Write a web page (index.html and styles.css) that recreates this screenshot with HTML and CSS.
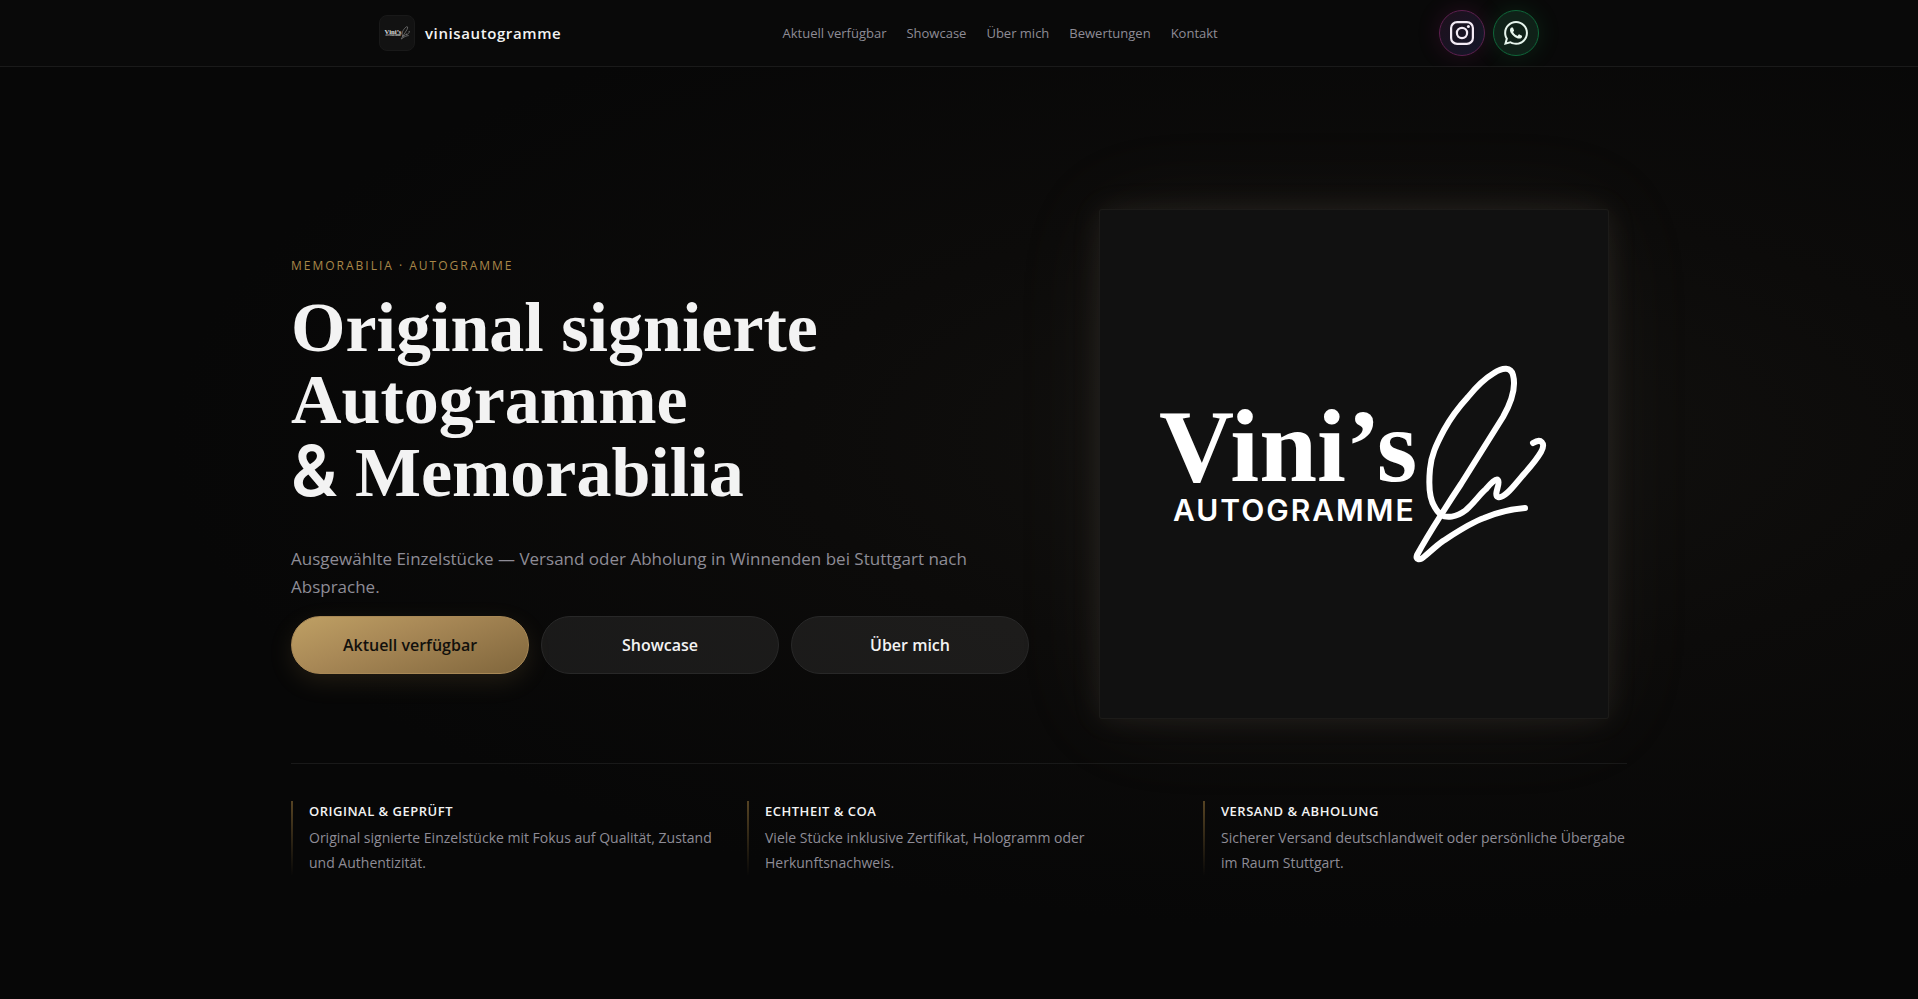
FILE: index.html
```
<!DOCTYPE html>
<html lang="de">
<head>
  <meta charset="UTF-8">
  <meta name="viewport" content="width=device-width, initial-scale=1.0">
  <title>vinisautogramme</title>
  <link rel="stylesheet" href="styles.css">
</head>
<body>
  <header class="site-header">
    <div class="header-inner">
      <a class="brand" href="#top">
        <span class="brand-mark">
          <svg viewBox="50 150 400 208" aria-hidden="true">
            <use href="#logo"></use>
          </svg>
        </span>
        <span class="brand-name">vinisautogramme</span>
      </a>
      <nav class="nav">
        <a href="#verfuegbar">Aktuell verfügbar</a>
        <a href="#showcase">Showcase</a>
        <a href="#ueber-mich">Über mich</a>
        <a href="#bewertungen">Bewertungen</a>
        <a href="#kontakt">Kontakt</a>
      </nav>
      <div class="socials">
        <a class="social social-instagram" href="#instagram" aria-label="Instagram">
          <svg viewBox="0 0 24 24" fill="none" stroke="currentColor" stroke-width="2.2" aria-hidden="true">
            <rect x="1.1" y="1.1" width="21.8" height="21.8" rx="6"></rect>
            <circle cx="12" cy="12" r="5.1"></circle>
            <circle cx="18.4" cy="5.6" r="1.5" fill="currentColor" stroke="none"></circle>
          </svg>
        </a>
        <a class="social social-whatsapp" href="#whatsapp" aria-label="WhatsApp">
          <svg viewBox="0 0 24 24" fill="currentColor" aria-hidden="true">
            <path d="M17.472 14.382c-.297-.149-1.758-.867-2.03-.967-.273-.099-.471-.148-.67.15-.197.297-.767.966-.94 1.164-.173.199-.347.223-.644.075-.297-.15-1.255-.463-2.39-1.475-.883-.788-1.48-1.761-1.653-2.059-.173-.297-.018-.458.13-.606.134-.133.298-.347.446-.52.149-.174.198-.298.298-.497.099-.198.05-.371-.025-.52-.075-.149-.669-1.612-.916-2.207-.242-.579-.487-.5-.669-.51-.173-.008-.371-.01-.57-.01-.198 0-.52.074-.792.372-.272.297-1.04 1.016-1.04 2.479 0 1.462 1.065 2.875 1.213 3.074.149.198 2.096 3.2 5.077 4.487.709.306 1.262.489 1.694.625.712.227 1.36.195 1.871.118.571-.085 1.758-.719 2.006-1.413.248-.694.248-1.289.173-1.413-.074-.124-.272-.198-.57-.347"></path>
            <path d="M.057 24l1.687-6.163c-1.041-1.804-1.588-3.849-1.587-5.946.003-6.556 5.338-11.891 11.893-11.891 3.181.001 6.167 1.24 8.413 3.488 2.245 2.248 3.481 5.236 3.48 8.414-.003 6.557-5.338 11.892-11.893 11.892-1.99-.001-3.951-.5-5.688-1.448l-6.305 1.654zm6.597-3.807c1.676.995 3.276 1.591 5.392 1.592 5.448 0 9.886-4.434 9.889-9.885.002-5.462-4.415-9.89-9.881-9.892-5.452 0-9.887 4.434-9.889 9.884-.001 2.225.651 3.891 1.746 5.634l-.999 3.648 3.742-.981z"></path>
          </svg>
        </a>
      </div>
    </div>
  </header>

  <main class="hero" id="top">
    <div class="hero-inner">
      <div class="hero-grid">
        <div class="hero-copy">
          <p class="eyebrow">Memorabilia · Autogramme</p>
          <h1>Original signierte<br>Autogramme<br><span class="amp">&amp;</span> Memorabilia</h1>
          <p class="lead">Ausgewählte Einzelstücke — Versand oder Abholung in Winnenden bei Stuttgart nach Absprache.</p>
          <div class="actions">
            <a class="btn btn-primary" href="#verfuegbar">Aktuell verfügbar</a>
            <a class="btn" href="#showcase">Showcase</a>
            <a class="btn" href="#ueber-mich">Über mich</a>
          </div>
        </div>
        <div class="hero-logo">
          <svg viewBox="0 0 508 508" role="img" aria-label="Vini's Autogramme">
            <g id="logo">
              <text class="logo-name" x="59" y="271">Vini’s</text>
              <text class="logo-sub" x="73" y="311">AUTOGRAMME</text>
              <g class="logo-sign">
                <path d="M341 305 C346 297 353 286 361 274 L403 207 C412 191 416 176 413 165 C411 157 403 157 394 163 C384 169 376 177 368 187 C357 199 350 209 344 220 C336 235 331 246 330 259 C328 281 330 295 341 305 C346 308 356 308 366 300 C376 291 379 285 386 279 C391 273 396 268 398 270 C401 273 393 285 398 287 C405 289 415 274 424 264 C432 255 437 249 441 242 C446 233 441 228 433 233"></path>
                <path d="M341 305 C334 316 323 334 317 345 C315 350 320 351 325 346 C331 341 336 336 343 331 C357 322 370 313 384 308 C398 302 412 299 425 298"></path>
              </g>
            </g>
          </svg>
        </div>
      </div>

      <ul class="features">
        <li class="feature">
          <h2>Original &amp; geprüft</h2>
          <p>Original signierte Einzelstücke mit Fokus auf Qualität, Zustand und Authentizität.</p>
        </li>
        <li class="feature">
          <h2>Echtheit &amp; COA</h2>
          <p>Viele Stücke inklusive Zertifikat, Hologramm oder Herkunftsnachweis.</p>
        </li>
        <li class="feature">
          <h2>Versand &amp; Abholung</h2>
          <p>Sicherer Versand deutschlandweit oder persönliche Übergabe im Raum Stuttgart.</p>
        </li>
      </ul>
    </div>
  </main>
</body>
</html>
```
FILE: styles.css
```
* {
  box-sizing: border-box;
}
body {
  margin: 0;
  min-height: 100vh;
  display: flex;
  flex-direction: column;
  background: #070707;
  color: #f3f3f3;
  font-family: "Open Sans", "Noto Sans", sans-serif;
}
a {
  color: inherit;
  text-decoration: none;
}

/* Header */
.site-header {
  background: #090909;
  border-bottom: 1px solid #1a1a1a;
}
.header-inner {
  max-width: 1160px;
  margin: 0 auto;
  padding: 10px 0;
  display: flex;
  align-items: center;
  justify-content: space-between;
}
.brand {
  display: flex;
  align-items: center;
  gap: 10px;
}
.brand-mark {
  width: 36px;
  height: 36px;
  padding: 4px;
  display: flex;
  align-items: center;
  background: #121212;
  border: 1px solid #191919;
  border-radius: 8px;
}
.brand-mark svg {
  width: 100%;
  opacity: 0.85;
}
.brand-name {
  font-size: 15px;
  font-weight: 600;
  letter-spacing: 0.6px;
}
.nav {
  display: flex;
  gap: 20px;
  font-size: 13px;
  color: #8e8c96;
}
.socials {
  display: flex;
  gap: 8px;
}
.social {
  width: 46px;
  height: 46px;
  display: flex;
  align-items: center;
  justify-content: center;
  border-radius: 50%;
}
.social svg {
  width: 24px;
  height: 24px;
}
.social-instagram {
  color: #f3eaf4;
  background: linear-gradient(135deg, #1e101c, #141629);
  border: 1px solid #5f2050;
  box-shadow: 0 0 24px rgba(190, 40, 150, 0.16);
}
.social-whatsapp {
  color: #e6f5ec;
  background: #0f2118;
  border: 1px solid #0f6639;
  box-shadow: 0 0 24px rgba(30, 190, 90, 0.14);
}

/* Hero */
.hero {
  flex: 1;
  display: flex;
  align-items: center;
  background: radial-gradient(ellipse at 72% 40%, #12110f 0%, #0c0b0a 30%, #070707 62%);
}
.hero-inner {
  width: 100%;
  max-width: 1336px;
  margin: 0 auto;
  padding-top: 19px;
}
.hero-grid {
  display: grid;
  grid-template-columns: 738fr 546fr;
  gap: 52px;
  align-items: center;
  padding-bottom: 45px;
  border-bottom: 1px solid #191919;
}
.hero-copy {
  padding-top: 4px;
}
.eyebrow {
  margin: 0 0 18px;
  color: #a88748;
  font-size: 12px;
  line-height: 16px;
  font-weight: 500;
  letter-spacing: 2px;
  text-transform: uppercase;
}
h1 {
  margin: 0 0 36px;
  font-family: "Liberation Serif", serif;
  font-size: 70px;
  line-height: 72px;
  font-weight: 700;
}
.amp {
  font-family: Inter, sans-serif;
  font-size: 70px;
  line-height: 1;
  font-weight: 600;
}
.lead {
  margin: 0 0 15px;
  max-width: 690px;
  color: #8e8c96;
  font-size: 17px;
  line-height: 28px;
}
.actions {
  display: grid;
  grid-template-columns: repeat(3, 1fr);
  gap: 12px;
}
.btn {
  padding: 16px;
  text-align: center;
  font-size: 16px;
  line-height: 24px;
  font-weight: 600;
  background: rgba(255, 255, 255, 0.07);
  border: 1px solid #282828;
  border-radius: 29px;
}
.btn-primary {
  color: #12100c;
  background: linear-gradient(160deg, #bfa064, #a88856 40%, #80663c);
  border-color: #a88856;
  box-shadow: 0 8px 24px rgba(184, 150, 86, 0.14);
}
.hero-logo {
  width: 100%;
  max-width: 508px;
  margin: 0 auto;
  background: #111111;
  border-radius: 2px;
  box-shadow: 0 0 0 1px #1c1b19, 0 0 30px rgba(190, 175, 150, 0.12), 0 0 100px rgba(190, 175, 150, 0.07);
}
.hero-logo svg {
  display: block;
  width: 100%;
}
.logo-name,
.logo-sub {
  fill: #ffffff;
}
.logo-name {
  font-family: "Liberation Serif", serif;
  font-size: 104px;
  font-weight: 700;
}
.logo-sub {
  font-family: Inter, sans-serif;
  font-size: 30px;
  font-weight: 600;
  letter-spacing: 2px;
}
.logo-sign {
  fill: none;
  stroke: #ffffff;
  stroke-width: 6;
  stroke-linecap: round;
  stroke-linejoin: round;
}

/* Features */
.features {
  margin: 0;
  padding: 37px 0 0;
  list-style: none;
  display: grid;
  grid-template-columns: repeat(3, 1fr);
  gap: 32px;
}
.feature {
  padding-left: 16px;
  border-left: 2px solid;
  border-image: linear-gradient(#574423, transparent) 1;
}
.feature h2 {
  margin: 0 0 4px;
  font-size: 13px;
  line-height: 20px;
  font-weight: 600;
  letter-spacing: 0.5px;
  text-transform: uppercase;
}
.feature p {
  margin: 0;
  color: #8e8c96;
  font-size: 14px;
  line-height: 25px;
}

@media (max-width: 1000px) {
  .hero-inner {
    padding: 32px 20px;
  }
  .hero-grid,
  .features {
    grid-template-columns: 1fr;
  }
}
```
